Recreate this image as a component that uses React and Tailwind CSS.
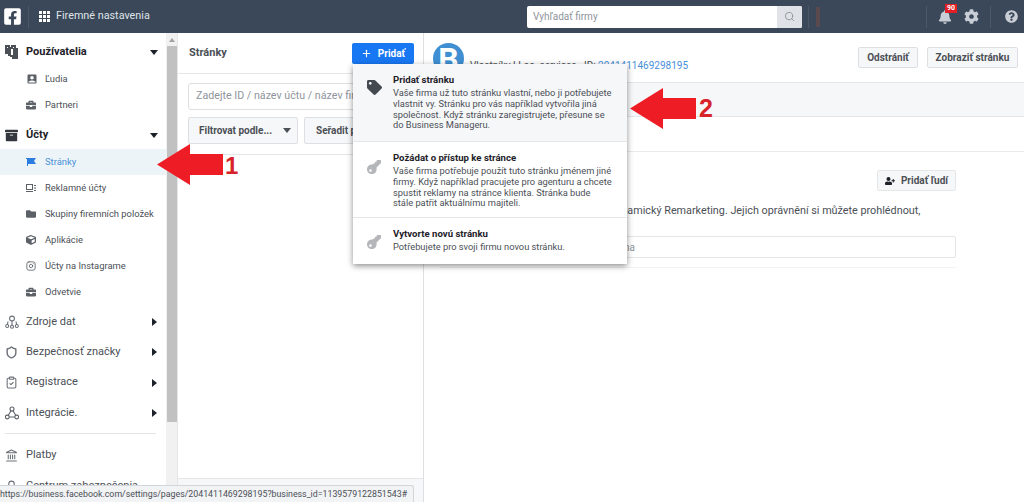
import { Search, Plus, Landmark, Lock, ClipboardCheck, Shield, Instagram } from 'lucide-react';
import { FaTag, FaKey, FaBell, FaCog, FaQuestionCircle, FaUserPlus, FaBriefcase, FaArchive, FaFolder, FaCube, FaFacebookSquare } from 'react-icons/fa';
import { MdAccountBox } from 'react-icons/md';

const Caret = ({ right }) => (
    right
        ? <span className="ml-auto mr-[9px] w-0 h-0 border-y-[4px] border-y-transparent border-l-[5px] border-l-[#1d2129]" />
        : <span className="ml-auto mr-[8px] w-0 h-0 border-x-[4px] border-x-transparent border-t-[5px] border-t-[#1d2129]" />
);

function UsersCards() {
    return (
        <svg width="13" height="14" viewBox="0 0 13 14" fill="#4b4f56">
            <path d="M0 0h5v2h1V0h5v3h2v11H7v-2H5v-1H3V9H0zM2 2v1h1V2zM8 2v1h1V2z" fillRule="evenodd" />
            <path d="M6 4h2v6H6z" fill="#fff" />
        </svg>
    );
}

function DataIcon() {
    return (
        <svg width="14" height="14" viewBox="0 0 14 14" fill="none" stroke="#6b7078" strokeWidth="1.1">
            <circle cx="7" cy="3.5" r="2.4" />
            <path d="M7 6v4M3 6.5 2.4 9.5M11 6.5l.6 3" />
            <circle cx="2.2" cy="11" r="1.5" />
            <circle cx="7" cy="11.8" r="1.5" />
            <circle cx="11.8" cy="11" r="1.5" />
        </svg>
    );
}

function TriangleNodes() {
    return (
        <svg width="14" height="14" viewBox="0 0 14 14" fill="none" stroke="#5c6067" strokeWidth="1.1">
            <circle cx="7" cy="3" r="2" />
            <circle cx="2.3" cy="11" r="1.9" />
            <circle cx="11.7" cy="11" r="1.9" />
            <path d="M6 4.8 3.3 9.3M8 4.8l2.7 4.5M4.2 11h5.6" />
        </svg>
    );
}

function AdsIcon() {
    return (
        <svg width="10" height="8" viewBox="0 0 10 8" fill="none" stroke="#5c6067" strokeWidth="1">
            <rect x="0.5" y="0.5" width="6" height="5" />
            <path d="M0 7.5h7M8 1.5h2M8 4h2M8 6.5h2" />
        </svg>
    );
}

function BannerIcon() {
    return (
        <svg width="10" height="8" viewBox="0 0 10 8" fill="#2d7ce0">
            <path d="M0 0h10L8 3l2 3H2v2H1V1H0z" />
        </svg>
    );
}

const subItems = [
    { label: 'Reklamné účty', icon: <AdsIcon /> },
    { label: 'Skupiny firemních položek', icon: <FaFolder size={10} /> },
    { label: 'Aplikácie', icon: <FaCube size={10} /> },
    { label: 'Účty na Instagrame', icon: <Instagram size={10} /> },
    { label: 'Odvetvie', icon: <FaBriefcase size={10} /> },
];

const mainItems = [
    { label: 'Zdroje dat', icon: <DataIcon />, h: 'h-[30px]' },
    { label: 'Bezpečnosť značky', icon: <Shield size={13} strokeWidth={2.6} />, h: 'h-[30px]' },
    { label: 'Registrace', icon: <ClipboardCheck size={13} />, h: 'h-[31px]' },
    { label: 'Integrácie.', icon: <TriangleNodes />, h: 'h-[30px]' },
];

function SubRow({ icon, label, active }) {
    return (
        <div className={`h-[26px] flex items-center pl-[26px] text-[9.4px] ${active ? 'bg-[#edf4f8] text-[#4a90d9]' : 'text-[#4b4f56]'}`}>
            <span className={`w-[19px] flex items-center ${active ? 'text-[#2d7ce0]' : 'text-[#5c6067]'}`}>{icon}</span>
            {label}
        </div>
    );
}

function Sidebar() {
    return (
        <div className="w-[166px] shrink-0 overflow-hidden pt-[3px]">
            <div className="h-[30px] pt-[2px] flex items-center pl-[5px] font-bold text-[11px] text-[#1d2129]">
                <span className="w-[21px] flex items-center"><UsersCards /></span>
                Používatelia
                <Caret />
            </div>
            <SubRow icon={<MdAccountBox size={12} />} label="Ľudia" />
            <SubRow icon={<FaBriefcase size={10} />} label="Partneri" />
            <div className="h-[31px] pt-[3px] flex items-center pl-[5px] font-bold text-[11px] text-[#1d2129]">
                <span className="w-[21px] flex items-center text-[#33373d]"><FaArchive size={13} /></span>
                Účty
                <Caret />
            </div>
            <SubRow active icon={<BannerIcon />} label="Stránky" />
            {subItems.map(item => <SubRow key={item.label} {...item} />)}
            <div className="h-[2px]" />
            {mainItems.map(item => (
                <div key={item.label} className={`${item.h} flex items-center pl-[5px] text-[11px] text-[#4b4f56]`}>
                    <span className="w-[21px] flex items-center text-[#6b7078]">{item.icon}</span>
                    {item.label}
                    <Caret right />
                </div>
            ))}
            <div className="mt-[5px] mx-[5px] w-[151px] h-px bg-[#e3e4e6]" />
            <div className="h-[42px] flex items-center pl-[5px] text-[11px] text-[#4b4f56]">
                <span className="w-[21px] flex items-center text-[#6b7078]"><Landmark size={13} /></span>
                Platby
            </div>
            <div className="h-[20px] flex items-center pl-[5px] text-[11px] text-[#4b4f56]">
                <span className="w-[21px] flex items-center text-[#6b7078]"><Lock size={13} /></span>
                Centrum zabezpečenia
            </div>
        </div>
    );
}

function Scrollbar() {
    return (
        <div className="w-[12px] shrink-0 bg-[#f1f1f1] flex flex-col items-center border-r border-[#e5e6e8]">
            <span className="mt-[5px] w-0 h-0 border-x-[3px] border-x-transparent border-b-[4px] border-b-[#a3a3a3]" />
            <div className="mt-[4px] w-[10px] h-[376px] bg-[#c1c1c1]" />
        </div>
    );
}

function PagesColumn() {
    return (
        <div className="w-[246px] shrink-0 flex flex-col border-r border-[#dddfe2] overflow-hidden">
            <div className="h-[41px] shrink-0 flex items-center justify-between pl-[11px] pr-[9px] border-b border-[#e5e6e8]">
                <span className="font-bold text-[11px] text-[#4b4f56]">Stránky</span>
                <button className="w-[62px] h-[21px] rounded-[2px] bg-[#1877f2] text-white font-bold text-[10px] flex items-center justify-center gap-[6px]">
                    <Plus size={11} strokeWidth={2.5} />
                    Pridať
                </button>
            </div>
            <div className="h-[81px] shrink-0 border-b border-[#e5e6e8] pl-[10px] pt-[9px]">
                <div className="w-[230px] h-[27px] rounded-[3px] border border-[#dddfe2] flex items-center pl-[7px] text-[10.7px] text-[#90949c] whitespace-nowrap overflow-hidden">
                    Zadejte ID / název účtu / název firmy
                </div>
                <div className="mt-[7px] flex gap-[6px] whitespace-nowrap">
                    <button className="w-[110px] h-[27px] shrink-0 rounded-[2px] border border-[#dddfe2] bg-[#f6f7f9] text-[#4b4f56] font-bold text-[10px] flex items-center pl-[10px]">
                        Filtrovat podle...
                        <span className="ml-[11px] w-0 h-0 border-x-[4px] border-x-transparent border-t-[5px] border-t-[#4b4f56]" />
                    </button>
                    <button className="w-[110px] h-[27px] shrink-0 rounded-[2px] border border-[#dddfe2] bg-[#f6f7f9] text-[#4b4f56] font-bold text-[10px] text-left pl-[11px]">
                        Seřadit podle
                    </button>
                </div>
            </div>
            <div className="flex-1" />
            <div className="h-[24px] shrink-0 bg-[#f6f7f9] border-t border-[#e5e6e8]" />
        </div>
    );
}

function DetailPanel() {
    return (
        <div className="flex-1 min-w-0 flex flex-col">
            <div className="h-[49px] shrink-0 flex pl-[9px] pr-[6px] relative">
                <div className="mt-[10px] w-[31px] h-[31px] rounded-full bg-[#3f8fd2] flex items-center justify-center text-white font-bold text-[32px] leading-none">
                    B
                </div>
                <div className="ml-[6px] mt-[26px] text-[10px] leading-[13px] text-[#4b4f56] whitespace-nowrap">
                    Vlastníky LLac. services <span className="ml-[5px]">ID:</span> <span className="text-[#4a90d9]">2041411469298195</span>
                </div>
                <div className="ml-auto mt-[14px] flex gap-[9px] font-bold text-[10px] text-[#4b4f56]">
                    <button className="w-[60px] h-[21px] rounded-[2px] border border-[#dddfe2] bg-[#f6f7f9]">Odstrániť</button>
                    <button className="w-[91px] h-[21px] rounded-[2px] border border-[#dddfe2] bg-[#f6f7f9]">Zobraziť stránku</button>
                </div>
            </div>
            <div className="h-[35px] shrink-0 bg-[#f6f7f9] border-y border-[#e5e6e8]" />
            <div className="h-[35px] shrink-0 border-b border-[#e9eaed]" />
            <div className="flex justify-end pr-[68px] pt-[18px]">
                <button className="w-[79px] h-[21px] rounded-[2px] border border-[#e5e6e8] bg-[#f6f7f9] font-bold text-[10px] text-[#4b4f56] flex items-center justify-center gap-[6px]">
                    <FaUserPlus size={10} className="text-[#1d2129]" />
                    Pridať ľudí
                </button>
            </div>
            <div className="mt-[13px] pl-[14px] text-[10.8px] leading-[14px] text-[#4b4f56] whitespace-nowrap">
                Tito lidé mají přístup ke stránce pro Dynamický Remarketing. Jejich oprávnění si můžete prohlédnout,
            </div>
            <div className="mt-[18px] ml-[16px] mr-[68px] h-[22px] rounded-[2px] border border-[#e5e6e8] flex items-center justify-end pr-[320px] text-[10px] text-[#90949c]">
                na
            </div>
            <div className="mt-[9px] ml-[16px] mr-[68px] h-px bg-[#f2f3f5]" />
        </div>
    );
}

function MenuItem({ icon, title, lines, active, h, iconPad }) {
    return (
        <div className={`${h} flex pl-[14px] ${active ? 'bg-[#f6f7f9]' : 'bg-white'} border-b border-[#e5e6e8] last:border-b-0`}>
            <span className={`w-[26px] shrink-0 ${iconPad}`}>{icon}</span>
            <div className="pt-[9px]">
                <div className="font-bold text-[9.6px] leading-[13px] text-[#1d2129]">{title}</div>
                <div className="mt-[2px] text-[9.3px] leading-[10.8px] text-[#4b4f56] whitespace-nowrap">
                    {lines.map(line => <div key={line}>{line}</div>)}
                </div>
            </div>
        </div>
    );
}

function AddMenu() {
    return (
        <div className="absolute left-[353px] top-[64px] w-[274px] bg-white shadow-[0_2px_6px_rgba(0,0,0,0.45)]">
            <MenuItem
                active
                h="h-[78px]"
                iconPad="pt-[16px]"
                icon={<FaTag size={15} className="text-[#444950]" />}
                title="Pridať stránku"
                lines={[
                    'Vaše firma už tuto stránku vlastní, nebo ji potřebujete',
                    'vlastnit vy. Stránku pro vás například vytvořila jiná',
                    'společnost. Když stránku zaregistrujete, přesune se',
                    'do Business Manageru.',
                ]}
            />
            <MenuItem
                h="h-[76px]"
                iconPad="pt-[18px]"
                icon={<FaKey size={14} className="text-[#b4b6ba] rotate-180" />}
                title="Požádat o přístup ke stránce"
                lines={[
                    'Vaše firma potřebuje použít tuto stránku jménem jiné',
                    'firmy. Když například pracujete pro agenturu a chcete',
                    'spustit reklamy na stránce klienta. Stránka bude',
                    'stále patřit aktuálnímu majiteli.',
                ]}
            />
            <MenuItem
                h="h-[46px]"
                iconPad="pt-[17px]"
                icon={<FaKey size={14} className="text-[#b4b6ba] rotate-180" />}
                title="Vytvorte novú stránku"
                lines={['Potřebujete pro svoji firmu novou stránku.']}
            />
        </div>
    );
}

function RedArrow({ className }) {
    return (
        <svg className={`absolute ${className}`} width="66" height="41" viewBox="0 0 66 41" fill="#ee1c25">
            <path d="M0 20.5 33 0v10h33v21H33v10z" />
        </svg>
    );
}

export default function App() {
    return (
        <div className="relative h-[502px] w-[1024px] overflow-hidden bg-white font-['Roboto',sans-serif]">
            <header className="h-[33px] bg-[#3b4859] flex items-center text-[#dfe3e8]">
                <div className="ml-[4px] w-[17px] h-[17px] flex items-center justify-center text-white">
                    <FaFacebookSquare size={19} />
                </div>
                <div className="ml-[7px] w-px h-[22px] bg-[#4c5869]" />
                <div className="ml-[10px] grid grid-cols-3 gap-[1px]">
                    {[1, 2, 3, 4, 5, 6, 7, 8, 9].map(n => <span key={n} className="w-[3px] h-[3px] bg-white" />)}
                </div>
                <span className="ml-[6px] w-[94px] whitespace-nowrap text-[10.8px]">Firemné nastavenia</span>
                <div className="ml-[377px] w-[275px] h-[22px] flex rounded-[2px] overflow-hidden bg-white text-[10px] text-[#90949c]">
                    <span className="flex-1 pl-[6px] flex items-center">Vyhľadať firmy</span>
                    <span className="w-[25px] bg-[#dfe3e8] flex items-center justify-center">
                        <Search size={11} className="text-[#90949c]" />
                    </span>
                </div>
                <div className="ml-[6px] w-px h-[22px] bg-[#4c5869]" />
                <div className="ml-[7px] w-[4px] h-[20px] bg-[#5a4a50]" />
                <div className="ml-[106px] w-px h-[22px] bg-[#4c5869]" />
                <div className="ml-[11px] relative">
                    <FaBell size={14} className="text-[#c9ced6]" />
                    <span className="absolute -top-[6px] left-[7px] w-[12px] h-[9px] bg-[#e41e26] text-white font-bold text-[7px] leading-[9px] text-center">90</span>
                </div>
                <FaCog size={15} className="ml-[12px] text-[#c9ced6]" />
                <div className="ml-[11px] w-px h-[22px] bg-[#4c5869]" />
                <FaQuestionCircle size={13} className="ml-[14px] text-[#c9ced6]" />
            </header>
            <div className="flex h-[469px]">
                <Sidebar />
                <Scrollbar />
                <PagesColumn />
                <DetailPanel />
            </div>
            <AddMenu />
            <RedArrow className="left-[157px] top-[144px]" />
            <span className="absolute left-[225px] top-[152px] font-['Liberation_Sans',sans-serif] font-bold text-[24px] leading-[28px] text-[#d8232a]">1</span>
            <RedArrow className="left-[630px] top-[88px]" />
            <span className="absolute left-[699px] top-[94px] font-['Liberation_Sans',sans-serif] font-bold text-[25px] leading-[28px] text-[#d8232a]">2</span>
            <div className="absolute left-0 bottom-0 h-[17px] w-[414px] rounded-tr-[3px] bg-[#f2f3f5] border-t border-r border-[#d4d5d7] text-[8.8px] leading-[16px] text-[#4b4f56] whitespace-nowrap overflow-hidden">
                https://business.facebook.com/settings/pages/2041411469298195?business_id=1139579122851543#
            </div>
        </div>
    );
}
